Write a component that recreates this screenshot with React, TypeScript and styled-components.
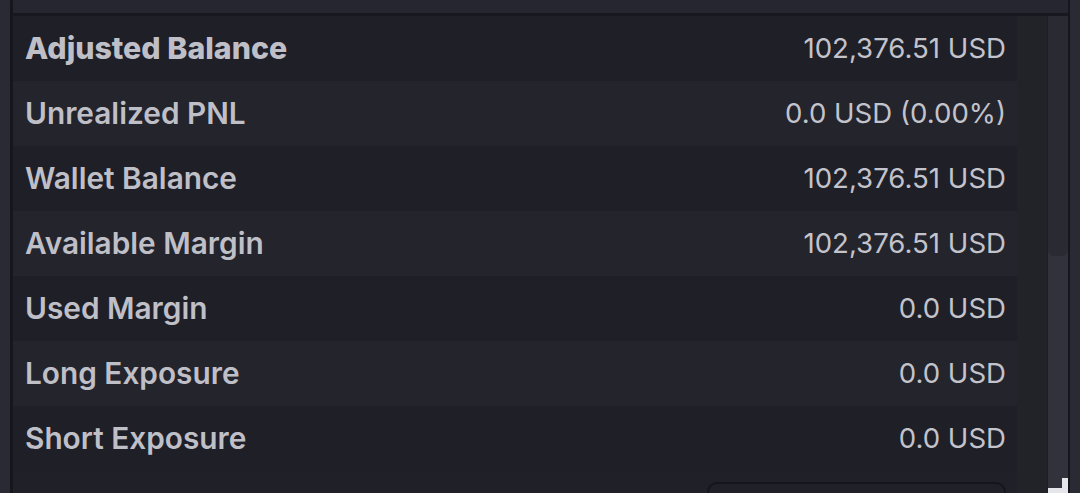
import React from "react";
import styled, { createGlobalStyle } from "styled-components";

const Global = createGlobalStyle`
  html, body { margin: 0; padding: 0; }
  body {
    background: #2a2a35;
    height: 493px;
    overflow: hidden;
    font-family: Inter, "Noto Sans", sans-serif;
  }
`;

const Frame = styled.div`
  display: flex;
  height: 493px;
  padding: 0 10px;
  box-sizing: border-box;
`;

const Panel = styled.div`
  flex: 1;
  display: flex;
  flex-direction: column;
  border-left: 3px solid #16161c;
  border-right: 2px solid #16161c;
  background: #1f1f27;
  position: relative;
  overflow: hidden;
`;

const Header = styled.div`
  height: 13px;
  flex: none;
  background: #262630;
  border-bottom: 3px solid #18181f;
`;

const Body = styled.div`
  flex: 1;
  display: flex;
  min-height: 0;
`;

const List = styled.div`
  width: 1004px;
  flex: none;
  display: flex;
  flex-direction: column;
  background: #202029;
`;

const Row = styled.div<{ $alt: boolean }>`
  height: 65px;
  flex: none;
  display: flex;
  align-items: center;
  justify-content: space-between;
  padding: 0 11px 2px 12px;
  box-sizing: border-box;
  background: ${(p) => (p.$alt ? "#24242d" : "#1f1f28")};
`;

const Label = styled.span<{ $strong?: boolean }>`
  font-size: ${(p) => (p.$strong ? "30.3px" : "29.8px")};
  font-weight: ${(p) => (p.$strong ? 800 : 600)};
  color: #bfbfc7;
`;

const Value = styled.span`
  font-size: 27.6px;
  font-weight: 400;
  color: #c3c3cb;
`;

const Footer = styled.div`
  display: flex;
  justify-content: flex-end;
  padding: 11px 11px 0 0;
`;

const OutlineButton = styled.div`
  width: 299px;
  height: 40px;
  border: 2px solid #15151b;
  border-radius: 10px;
  box-sizing: border-box;
`;

const Gutter = styled.div`
  width: 30px;
  flex: none;
  background: #222229;
`;

const Track = styled.div`
  width: 21px;
  flex: none;
  background: #32323c;
  border-left: 1px solid #1d1d24;
  box-sizing: border-box;
  display: flex;
  flex-direction: column;
`;

const Thumb = styled.div`
  height: 240px;
  background: #2a2a33;
  border-radius: 0 0 6px 6px;
`;

const Grip = styled.svg`
  position: absolute;
  right: 0;
  bottom: 0;
`;

const rows = [
  { label: "Adjusted Balance", value: "102,376.51 USD", strong: true },
  { label: "Unrealized PNL", value: "0.0 USD (0.00%)" },
  { label: "Wallet Balance", value: "102,376.51 USD" },
  { label: "Available Margin", value: "102,376.51 USD" },
  { label: "Used Margin", value: "0.0 USD" },
  { label: "Long Exposure", value: "0.0 USD" },
  { label: "Short Exposure", value: "0.0 USD" },
];

export default function App() {
  return (
    <>
      <Global />
      <Frame>
        <Panel>
          <Header />
          <Body>
            <List>
              {rows.map((r, i) => (
                <Row key={r.label} $alt={i % 2 === 1}>
                  <Label $strong={r.strong}>{r.label}</Label>
                  <Value>{r.value}</Value>
                </Row>
              ))}
              <Footer>
                <OutlineButton />
              </Footer>
            </List>
            <Gutter />
            <Track>
              <Thumb />
            </Track>
          </Body>
          <Grip width="20" height="15" viewBox="0 0 20 15">
            <path d="M14 0h6v15H0v-5h14z" fill="#e6e6ea" />
          </Grip>
        </Panel>
      </Frame>
    </>
  );
}
